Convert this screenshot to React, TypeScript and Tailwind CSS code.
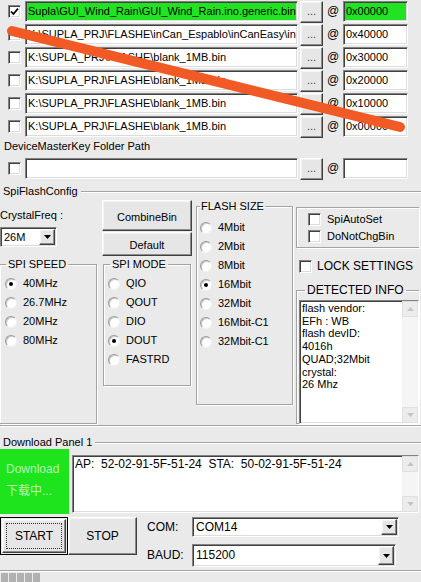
import React from "react";

const sunken =
  "border border-t-[#828282] border-l-[#828282] border-b-white border-r-white shadow-[inset_1px_1px_0_#404040,inset_-1px_-1px_0_#dcdcdc]";
const raised =
  "border border-t-white border-l-white border-b-[#404040] border-r-[#404040] shadow-[inset_-1px_-1px_0_#8c8c8c,inset_1px_1px_0_#f4f4f4]";
const etched = "border border-[#a3a3a3] shadow-[1px_1px_0_white,inset_1px_1px_0_white]";

function Check({ checked = false }: { checked?: boolean }) {
  return (
    <div className={`w-[13px] h-[13px] bg-white flex items-center justify-center ${sunken}`}>
      {checked && (
        <svg width="9" height="9" viewBox="0 0 9 9">
          <path d="M1 4.5 L3.4 7 L8 1.6" fill="none" stroke="black" strokeWidth="1.8" />
        </svg>
      )}
    </div>
  );
}

function Radio({ on = false }: { on?: boolean }) {
  return (
    <div className="w-[12px] h-[12px] rounded-full bg-white border border-t-[#9a9a9a] border-l-[#9a9a9a] border-r-[#f2f2f2] border-b-[#f2f2f2] shadow-[inset_1px_1px_0_#c8c8c8] flex items-center justify-center">
      {on && <div className="w-[4px] h-[4px] rounded-full bg-black" />}
    </div>
  );
}

function Arrow({ down = true, color = "black" }: { down?: boolean; color?: string }) {
  return (
    <svg width="7" height="4" viewBox="0 0 7 4">
      <path d={down ? "M0 0 H7 L3.5 4 Z" : "M0 4 H7 L3.5 0 Z"} fill={color} />
    </svg>
  );
}

function Select({ value, className }: { value: string; className: string }) {
  return (
    <div className={`flex items-stretch bg-white ${sunken} ${className}`}>
      <div className="flex-1 flex items-center pl-[3px]">{value}</div>
      <div className={`w-[16px] m-[1px] bg-[#e6e6e6] flex items-center justify-center ${raised}`}>
        <Arrow />
      </div>
    </div>
  );
}

function ScrollBar() {
  return (
    <div className="w-[16px] flex flex-col bg-[#f5f5f5]">
      <div className="h-[16px] bg-[#ececec] flex items-center justify-center border border-[#e0e0e0]">
        <Arrow down={false} color="#c4c4c4" />
      </div>
      <div className="flex-1" />
      <div className="h-[16px] bg-[#ececec] flex items-center justify-center border border-[#e0e0e0]">
        <Arrow color="#c4c4c4" />
      </div>
    </div>
  );
}

function FileRow({ path, addr, checked = false, green = false }: { path: string; addr: string; checked?: boolean; green?: boolean }) {
  const bg = green ? "bg-[#22e322]" : "bg-white";
  return (
    <div className="flex h-[21px] items-center">
      <div className="w-[25px] pl-[8px]">
        <Check checked={checked} />
      </div>
      <div className={`w-[273px] h-[21px] ${bg} ${sunken} flex items-center pl-[2px] overflow-hidden whitespace-nowrap`}>{path}</div>
      <div className={`ml-[2px] w-[23px] h-[22px] bg-[#e6e6e6] ${raised} flex items-end justify-center pb-[4px] text-[#444]`}>...</div>
      <div className="w-[20px] pl-[4px] text-[12px]">@</div>
      <div className={`w-[65px] h-[21px] ${bg} ${sunken} flex items-center pl-[2px]`}>{addr}</div>
    </div>
  );
}

function RadioRow({ label, on = false, pad }: { label: string; on?: boolean; pad: string }) {
  return (
    <div className={`h-[19px] flex items-center gap-[6px] ${pad}`}>
      <Radio on={on} />
      <span>{label}</span>
    </div>
  );
}

export default function App() {
  return (
    <div className="relative w-[421px] h-[582px] overflow-hidden bg-[#eaeaea] text-[11px] leading-[13px] text-black font-['Liberation_Sans','Noto_Sans_CJK_SC',sans-serif]">
      {/* file list */}
      <div className="flex flex-col gap-[2px] pt-[1px]">
        <FileRow checked green path="Supla\GUI_Wind_Rain\GUI_Wind_Rain.ino.generic.bin" addr="0x00000" />
        <FileRow path="K:\SUPLA_PRJ\FLASHE\inCan_Espablo\inCanEasy\in" addr="0x40000" />
        <FileRow path="K:\SUPLA_PRJ\FLASHE\blank_1MB.bin" addr="0x30000" />
        <FileRow path="K:\SUPLA_PRJ\FLASHE\blank_1MB.bin" addr="0x20000" />
        <FileRow path="K:\SUPLA_PRJ\FLASHE\blank_1MB.bin" addr="0x10000" />
        <FileRow path="K:\SUPLA_PRJ\FLASHE\blank_1MB.bin" addr="0x00000" />
      </div>

      <div className="h-[18px] flex items-center pl-[4px]">DeviceMasterKey Folder Path</div>
      <div className="mt-[3px]">
        <FileRow path="" addr="" />
      </div>

      {/* SpiFlashConfig */}
      <div className="mt-[6px] h-[13px] flex items-center">
        <span className="pl-[3px]">SpiFlashConfig</span>
        <div className="flex-1 ml-[3px] h-[2px] border-t border-t-[#a3a3a3] border-b border-b-white" />
      </div>
      <div className="flex items-start h-[227px]">
        <div className="w-[97px] flex flex-col">
          <div className="mt-[11px] h-[13px]">CrystalFreq :</div>
          <Select value="26M" className="mt-[5px] w-[57px] h-[20px]" />
          <fieldset className={`mt-[11px] h-[166px] ${etched} border-l-0`}>
            <legend className="ml-[6px] px-[2px]">SPI SPEED</legend>
            <div className="pt-[3px]">
              <RadioRow pad="pl-[5px]" on label="40MHz" />
              <RadioRow pad="pl-[5px]" label="26.7MHz" />
              <RadioRow pad="pl-[5px]" label="20MHz" />
              <RadioRow pad="pl-[5px]" label="80MHz" />
            </div>
          </fieldset>
        </div>

        <div className="ml-[5px] w-[90px] flex flex-col">
          <div className={`mt-[2px] h-[31px] bg-[#e6e6e6] ${raised} flex items-center justify-center pt-[4px]`}>CombineBin</div>
          <div className={`mt-[1px] h-[24px] bg-[#e6e6e6] ${raised} flex items-center justify-center pt-[2px]`}>Default</div>
          <fieldset className={`mt-[2px] ml-[1px] w-[88px] h-[128px] ${etched}`}>
            <legend className="ml-[6px] px-[2px]">SPI MODE</legend>
            <div className="pt-[3px]">
              <RadioRow pad="pl-[4px]" label="QIO" />
              <RadioRow pad="pl-[4px]" label="QOUT" />
              <RadioRow pad="pl-[4px]" label="DIO" />
              <RadioRow pad="pl-[4px]" on label="DOUT" />
              <RadioRow pad="pl-[4px]" label="FASTRD" />
            </div>
          </fieldset>
        </div>

        <fieldset className={`ml-[4px] mt-[2px] w-[97px] h-[205px] ${etched}`}>
          <legend className="ml-[3px] px-[1px]">FLASH SIZE</legend>
          <div className="pt-[5px]">
            <RadioRow pad="pl-[3px]" label="4Mbit" />
            <RadioRow pad="pl-[3px]" label="2Mbit" />
            <RadioRow pad="pl-[3px]" label="8Mbit" />
            <RadioRow pad="pl-[3px]" on label="16Mbit" />
            <RadioRow pad="pl-[3px]" label="32Mbit" />
            <RadioRow pad="pl-[3px]" label="16Mbit-C1" />
            <RadioRow pad="pl-[3px]" label="32Mbit-C1" />
          </div>
        </fieldset>

        <div className="ml-[3px] w-[123px] flex flex-col">
          <div className={`mt-[9px] h-[41px] ${etched} border-r-0 flex flex-col justify-center gap-[4px] pl-[11px]`}>
            <div className="flex items-center gap-[6px]">
              <Check />
              <span>SpiAutoSet</span>
            </div>
            <div className="flex items-center gap-[6px]">
              <Check />
              <span>DoNotChgBin</span>
            </div>
          </div>
          <div className="mt-[9px] h-[19px] flex items-center gap-[5px] pl-[3px] text-[12px]">
            <Check />
            <span>LOCK SETTINGS</span>
          </div>
          <fieldset className={`mt-[8px] h-[140px] ${etched} border-r-0`}>
            <legend className="ml-[8px] px-[2px] text-[12px]">DETECTED INFO</legend>
            <div className={`mt-[3px] ml-[2px] h-[124px] bg-white ${sunken} flex`}>
              <div className="flex-1 pl-[2px] pt-[1px] leading-[12.7px]">
                <div>flash vendor:</div>
                <div>EFh : WB</div>
                <div>flash devID:</div>
                <div>4016h</div>
                <div>QUAD;32Mbit</div>
                <div>crystal:</div>
                <div>26 Mhz</div>
              </div>
              <ScrollBar />
            </div>
          </fieldset>
        </div>
      </div>
      <div className="h-[2px] border-t border-t-[#a3a3a3] border-b border-b-white" />

      {/* Download panel */}
      <div className="mt-[9px] h-[13px] flex items-center">
        <span className="pl-[3px]">Download Panel 1</span>
        <div className="flex-1 ml-[3px] h-[2px] border-t border-t-[#a3a3a3] border-b border-b-white" />
      </div>
      <div className="flex items-start">
        <div className="w-[69px] h-[65px] bg-[#1ee41e] flex flex-col pl-[6px] pt-[14px] gap-[9px] text-[#b9f2b9] text-[12px]">
          <span>Download</span>
          <span>下载中...</span>
        </div>
        <div className={`ml-[3px] mt-[6px] w-[347px] h-[58px] bg-white ${sunken} flex`}>
          <div className="flex-1 pl-[2px] pt-[2px] whitespace-pre text-[12px]">AP:  52-02-91-5F-51-24  STA:  50-02-91-5F-51-24</div>
          <ScrollBar />
        </div>
      </div>
      <div className="mt-[3px] flex items-start">
        <div className="w-[68px] h-[38px] border border-black p-[1px]">
          <div className={`h-full bg-[#e6e6e6] ${raised} flex items-center justify-center`}>
            <div className="px-[10px] py-[8px] outline-1 outline-dotted outline-[#333] -outline-offset-4 w-[62px] h-[32px] flex items-center justify-center text-[12px]">START</div>
          </div>
        </div>
        <div className={`w-[69px] h-[38px] bg-[#e6e6e6] ${raised} flex items-center justify-center text-[12px]`}>STOP</div>
        <div className="ml-[10px] flex flex-col">
          <div className="flex items-center h-[20px]">
            <span className="w-[45px] text-[12px]">COM:</span>
            <Select value="COM14" className="w-[207px] h-[20px] text-[12px]" />
          </div>
          <div className="mt-[7px] flex items-center h-[23px]">
            <span className="w-[45px] text-[12px]">BAUD:</span>
            <Select value="115200" className="w-[204px] h-[23px] text-[12px]" />
          </div>
        </div>
      </div>
      <div className="mt-[3px] h-[2px] border-t border-t-[#a3a3a3] border-b border-b-white" />
      <div className="mt-[1px] flex gap-[1px] pl-[1px]">
        <div className="w-[7px] h-[10px] bg-[#b1b1b1]" />
        <div className="w-[7px] h-[10px] bg-[#b1b1b1]" />
        <div className="w-[7px] h-[10px] bg-[#b1b1b1]" />
        <div className="w-[7px] h-[10px] bg-[#b1b1b1]" />
        <div className="w-[7px] h-[10px] bg-[#b1b1b1]" />
      </div>

      {/* annotation stroke over the window */}
      <svg className="absolute inset-0 pointer-events-none" width="421" height="582">
        <line x1="12" y1="31" x2="400" y2="127" stroke="#f15a24" strokeWidth="10" strokeLinecap="round" />
      </svg>
    </div>
  );
}
